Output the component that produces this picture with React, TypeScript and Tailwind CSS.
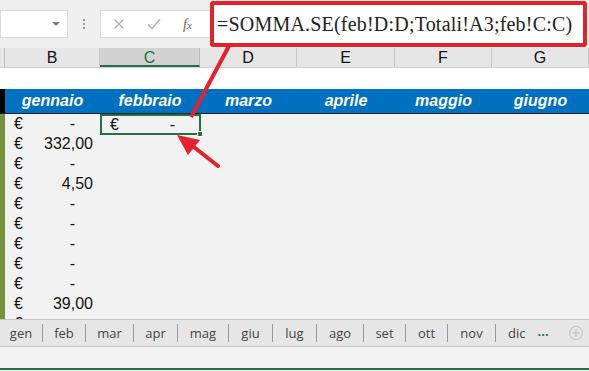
import React from "react";

const cols = [
  { key: "B", w: "w-[95px]", month: "gennaio" },
  { key: "C", w: "w-[100px]", month: "febbraio" },
  { key: "D", w: "w-[97px]", month: "marzo" },
  { key: "E", w: "w-[98px]", month: "aprile" },
  { key: "F", w: "w-[97px]", month: "maggio" },
  { key: "G", w: "w-[97px]", month: "giugno" },
];

const values = ["-", "332,00", "-", "4,50", "-", "-", "-", "-", "-", "39,00", "-"];

const tabs = [
  { name: "gen", w: "w-[43px]" },
  { name: "feb", w: "w-[43px]" },
  { name: "mar", w: "w-[48px]" },
  { name: "apr", w: "w-[44px]" },
  { name: "mag", w: "w-[51px]" },
  { name: "giu", w: "w-[44px]" },
  { name: "lug", w: "w-[44px]" },
  { name: "ago", w: "w-[47px]" },
  { name: "set", w: "w-[42px]" },
  { name: "ott", w: "w-[42px]" },
  { name: "nov", w: "w-[48px]" },
];

export default function App() {
  return (
    <div className="relative w-[589px] h-[371px] overflow-hidden bg-[#f2f2f2] font-['Liberation_Sans',Arial,sans-serif] text-[#111]">
      {/* formula bar */}
      <div className="h-[48px] flex items-center bg-[#efefef]">
        <div className="w-[68px] h-[28px] bg-white border border-[#dadada] flex items-center justify-end pr-[6px]">
          <svg width="10" height="6" viewBox="0 0 10 6">
            <path d="M1 1 L9 1 L5 5 Z" fill="#7a7a7a" />
          </svg>
        </div>
        <div className="w-[32px] flex flex-col items-center gap-[2px]">
          <span className="w-[2px] h-[2px] bg-[#9a9a9a]" />
          <span className="w-[2px] h-[2px] bg-[#9a9a9a]" />
          <span className="w-[2px] h-[2px] bg-[#9a9a9a]" />
        </div>
        <div className="w-[110px] h-[28px] bg-white border border-[#dadada] border-r-0 flex items-center">
          <svg className="ml-[12px]" width="12" height="12" viewBox="0 0 12 12">
            <path d="M1.5 1.5 L10.5 10.5 M10.5 1.5 L1.5 10.5" stroke="#b0b0b0" strokeWidth="1.3" />
          </svg>
          <svg className="ml-[22px]" width="14" height="12" viewBox="0 0 14 12">
            <path d="M1 6.5 L5 10.5 L13 1.5" stroke="#b0b0b0" strokeWidth="1.4" fill="none" />
          </svg>
          <span className="ml-[22px] font-['Liberation_Serif',serif] italic text-[14px] text-[#666]">
            f<span className="text-[11px]">x</span>
          </span>
        </div>
        <div className="h-[46px] w-[377px] mt-[1px] self-start border-[4px] border-[#e3222b] rounded-[3px] bg-white flex items-center pl-[3px] font-['Liberation_Serif',serif] text-[20px] tracking-[0.2px] text-[#222]">
          =SOMMA.SE(feb!D:D;Totali!A3;feb!C:C)
        </div>
      </div>

      {/* column headers */}
      <div className="h-[20px] flex bg-[#e6e6e6] border-b border-[#d0d0d0] text-[16px] leading-[19px]">
        <div className="w-[5px] border-r border-[#bdbdbd]" />
        {cols.map((c) => (
          <div
            key={c.key}
            className={
              c.key === "C"
                ? `${c.w} text-center bg-[#d2d2d2] text-[#217346] border-r border-[#bdbdbd] border-b-2 border-b-[#217346]`
                : `${c.w} text-center border-r border-[#c8c8c8]`
            }
          >
            {c.key}
          </div>
        ))}
      </div>

      {/* empty row */}
      <div className="h-[21px] bg-white" />

      {/* month header */}
      <div className="h-[25px] flex border-b border-[#1e1e1e]">
        <div className="w-[5px] bg-black" />
        {cols.map((c) => (
          <div
            key={c.key}
            className={`${c.w} bg-[#0070c0] text-white font-bold italic text-[16px] flex items-center justify-center`}
          >
            {c.month}
          </div>
        ))}
      </div>

      {/* data rows */}
      <div className="h-[205px] overflow-hidden">
        {values.map((v, i) => (
          <div key={i} className="h-[20px] flex text-[16px] leading-[20px]">
            <div className="w-[5px] bg-[#76923c]" />
            <div className="w-[95px] flex justify-between pl-[9px]">
              <span>€</span>
              <span className={v === "-" ? "pr-[25px]" : "pr-[7px]"}>{v}</span>
            </div>
            {i === 0 ? (
              <div className="relative w-[101px] h-[21px] border-2 border-[#217346] flex justify-between pl-[8px] leading-[17px]">
                <span>€</span>
                <span className="pr-[24px]">-</span>
                <span className="absolute -right-[4px] -bottom-[4px] w-[6px] h-[6px] bg-[#217346] border border-white" />
              </div>
            ) : null}
          </div>
        ))}
      </div>

      {/* sheet tabs */}
      <div className="h-[28px] flex items-center bg-[#e6e6e6] border-t border-b border-[#c6c6c6] font-['Open_Sans',sans-serif] text-[13px] text-[#444]">
        {tabs.map((t) => (
          <div key={t.name} className={`${t.w} h-[18px] flex items-center justify-center border-r border-[#9a9a9a] leading-none`}>
            {t.name}
          </div>
        ))}
        <div className="pl-[12px] leading-none">dic</div>
        <div className="pl-[12px] text-[#217346] font-bold leading-none pb-[4px]">...</div>
        <div className="ml-[20px] w-[14px] h-[14px] rounded-full border border-[#c2c2c2] flex items-center justify-center">
          <svg width="8" height="8" viewBox="0 0 8 8">
            <path d="M4 0.5 V7.5 M0.5 4 H7.5" stroke="#c2c2c2" strokeWidth="1.2" />
          </svg>
        </div>
      </div>

      {/* status bar */}
      <div className="h-[23px] bg-[#f3f3f3] border-b-2 border-[#217346]" />

      {/* annotation arrows */}
      <svg className="absolute left-0 top-0 pointer-events-none" width="589" height="371" viewBox="0 0 589 371">
        <line x1="230" y1="44" x2="191" y2="117" stroke="#e3222b" strokeWidth="4" />
        <line x1="218" y1="166" x2="190" y2="144" stroke="#e3222b" strokeWidth="4" strokeLinecap="round" />
        <polygon points="177,135 188,155 200,140" fill="#e3222b" />
      </svg>
    </div>
  );
}
